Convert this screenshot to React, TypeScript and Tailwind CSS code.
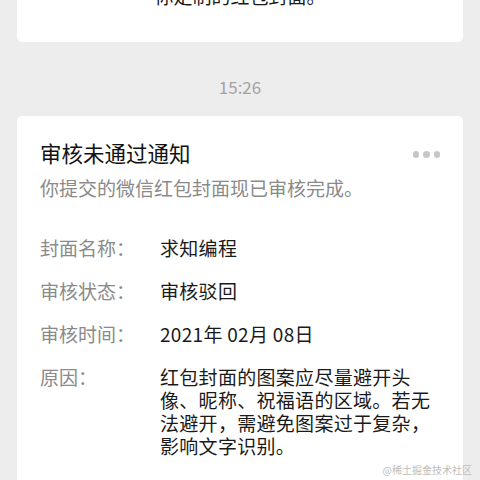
const font = {
  fontFamily: '"PingFang SC", "Noto Sans CJK SC", "Noto Sans", sans-serif',
};

const rows: { label: string; value: string }[] = [
  { label: "封面名称：", value: "求知编程" },
  { label: "审核状态：", value: "审核驳回" },
  { label: "审核时间：", value: "2021年 02月 08日" },
  {
    label: "原因：",
    value:
      "红包封面的图案应尽量避开头像、昵称、祝福语的区域。若无法避开，需避免图案过于复杂，影响文字识别。",
  },
  { label: "备注：", value: "可前往微信红包封面开放平台修改后重新提交审核。" },
];

function MoreDots() {
  return (
    <div className="flex items-center gap-[4px] pt-[3px]">
      <span className="h-[6.5px] w-[6.5px] rounded-full bg-[#c6c6c6]" />
      <span className="h-[6.5px] w-[6.5px] rounded-full bg-[#c6c6c6]" />
      <span className="h-[6.5px] w-[6.5px] rounded-full bg-[#c6c6c6]" />
    </div>
  );
}

export default function App() {
  return (
    <div
      className="relative flex h-[480px] w-[480px] flex-col overflow-hidden bg-[#ededed] px-[17px]"
      style={font}
    >
      {/* previous message, cut off at the top */}
      <div className="mt-[-40px] rounded-[5px] bg-white pb-[35px] pt-[24px] text-center text-[19px] leading-[23px] text-[#1a1a1a]">
        你定制的红包封面。
      </div>

      <div className="mb-[19px] mt-[35px] text-center text-[17px] leading-[20px] text-[#a3a3a3]">
        15:26
      </div>

      <div className="rounded-[5px] bg-white px-[23px] pt-[23px]">
        <div className="flex items-center justify-between">
          <h2 className="text-[21.5px] font-normal leading-[28px] text-[#111]">审核未通过通知</h2>
          <MoreDots />
        </div>
        <p className="mt-[8px] text-[19px] leading-[26px] text-[#8a8a8a]">
          你提交的微信红包封面现已审核完成。
        </p>

        <div className="mt-[35px] flex flex-col gap-[20px]">
          {rows.map((r) => (
            <div key={r.label} className="flex text-[19px] leading-[23px]">
              <div className="w-[120px] shrink-0 text-[#8a8a8a]">{r.label}</div>
              <div className="w-[280px] tracking-[0.3px] text-[#1a1a1a]">{r.value}</div>
            </div>
          ))}
        </div>
      </div>

      <div className="absolute bottom-[4px] right-[8px] text-[10px] leading-[12px] text-[#bdbdbd]">
        @稀土掘金技术社区
      </div>
    </div>
  );
}
